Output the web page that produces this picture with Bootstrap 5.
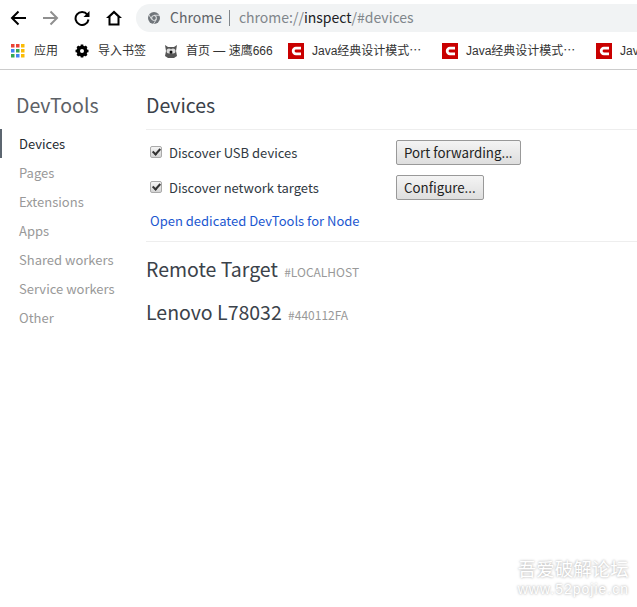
<!DOCTYPE html>
<html lang="en">
<head>
<meta charset="utf-8">
<title>Inspect with Chrome Developer Tools</title>
<link rel="stylesheet" href="https://cdn.jsdelivr.net/npm/bootstrap@5.3.0/dist/css/bootstrap.min.css">
<style>
html,body{height:100%;overflow:hidden}
body{font-family:"Noto Sans CJK SC","Noto Sans",sans-serif;font-size:13px;color:#303942;background:#fff;width:637px;height:607px;position:relative}
.tb-top{height:35px;padding:4px 0 3px}
.tb-ic{height:28px;flex:none}
.w-a{width:36px}
.w-b{width:30px}
.w-c{width:32px}
.w-d{width:32px;margin-right:6px}
.addr{flex:1;height:28px;background:#f1f3f4;border-radius:14px 0 0 14px;padding:0 0 1px 12px;font-size:14px;color:#5f6368;white-space:nowrap;overflow:hidden}
.addr-logo{margin-right:10px;flex:none}
.addr-sep{width:1px;height:16px;background:#80868b;margin:0 9px 0 7px}
.addr-dim{color:#80868b}
.addr-main{color:#202124}
.bm-row{height:35px;border-bottom:1px solid #ccc;white-space:nowrap;overflow:hidden;font-size:12px;color:#333;padding-left:10px;padding-bottom:3px;font-family:"Liberation Sans","Noto Sans CJK SC",sans-serif}
.bm-item{flex:none;display:flex;align-items:center}
.bm-ic{width:16px;height:16px;flex:none;margin-right:8px;display:block}
.bm-tight{margin-right:7px}
.b1{width:64px}
.b2{width:89px}
.b3{width:125px}
.b4{width:154px}
.shell{height:537px}
.side{width:136px;flex:none;padding-top:19px}
.side-title{font-size:19.5px;font-weight:400;color:#5c6166;margin:0 0 8px 16px;line-height:32px}
.side-link{display:block;height:29px;line-height:29px;padding-left:19px;color:#999;text-decoration:none;font-size:13px}
.side-link.on{color:#262c32;padding-left:17px;border-left:2px solid #5c6670}
.main{flex:1;padding:0 0 0 10px;min-width:0}
.pg-head{height:60px;border-bottom:1px solid #eee;padding-top:19px}
.pg-title{font-size:19.5px;font-weight:400;margin:0;line-height:32px;color:#3b424a}
.opt-row{height:35px}
.opt-first{margin-top:5px}
.opt-lab{width:250px;padding-left:4px;margin:0;font-size:13px;display:flex;align-items:center;color:#303942;padding-top:1px}
.chk{appearance:none;width:12px;height:12px;margin:0 7px 3px 0;border:1px solid #aaa;border-radius:2px;background:linear-gradient(#f4f4f4,#d4d4d4);position:relative;flex:none}
.chk::after{content:"";position:absolute;left:3px;top:0;width:5px;height:8px;border:solid #333;border-width:0 2px 2px 0;transform:rotate(42deg)}
.act-btn{height:25px;padding:0 7px;border:1px solid #999;border-radius:2px;background:linear-gradient(#f4f4f4,#dedede);font-size:13.3px;line-height:22px;color:#222}
.node-link{display:block;margin:6px 0 0 4px;color:#1b57d0;text-decoration:none;font-size:13px;line-height:20px;height:30px}
.sep{border-top:1px solid #eee;height:0}
.tgt{line-height:32px;margin:0;font-size:19.5px;font-weight:400;color:#3b424a}
.tgt-sub{font-size:12px;color:#999;margin-left:2px;text-transform:uppercase;font-weight:400}
.tgt-a{margin-top:11px}
.tgt-b{margin-top:8px}
.wm{position:absolute;right:8px;bottom:11px;color:#fff;text-align:center;text-shadow:0 0 3px #bbb,0 0 2px #ccc;line-height:1;pointer-events:none}
.wm-a{font-size:18.5px;margin-bottom:5px}
.wm-b{font-size:14px;letter-spacing:1px;font-family:"Liberation Sans",sans-serif}
</style>
</head>
<body>
<header>
  <div class="tb-top d-flex align-items-center">
    <div class="tb-ic w-a d-flex align-items-center justify-content-center">
      <svg width="16" height="16" viewBox="0 0 16 16"><path d="M16 8H2M8.500 1.500L2 8l6.500 6.500" fill="none" stroke="#000" stroke-width="2"/></svg>
    </div>
    <div class="tb-ic w-b d-flex align-items-center justify-content-center">
      <svg width="16" height="16" viewBox="0 0 16 16"><path d="M0 8h14M7.500 1.500L14 8l-6.500 6.500" fill="none" stroke="#8f8f8f" stroke-width="2"/></svg>
    </div>
    <div class="tb-ic w-c d-flex align-items-center justify-content-center">
      <svg width="16" height="16" viewBox="0 0 16 16"><path d="M13.300 4.600A6.500 6.500 0 1 0 14.500 9.500" fill="none" stroke="#000" stroke-width="2"/><path d="M15.500 1v6h-6z" fill="#000"/></svg>
    </div>
    <div class="tb-ic w-d d-flex align-items-center justify-content-center">
      <svg width="16" height="16" viewBox="0 0 16 16"><path d="M8 .5L0 8h2.500v7.500h11V8H16zM4.500 13.500V6.800L8 3.400l3.500 3.400v6.700z" fill="#000" fill-rule="evenodd"/></svg>
    </div>
    <div class="addr d-flex align-items-center">
      <svg class="addr-logo" width="12" height="12" viewBox="0 0 14 14"><circle cx="7" cy="7" r="7" fill="#70757a"/><circle cx="7" cy="7" r="3.200" fill="#f1f3f4"/><circle cx="7" cy="7" r="2.200" fill="#70757a"/><path d="M7 3.800h7M4.200 8.600L.8 2.800M9.800 8.600L6.400 14" stroke="#f1f3f4" stroke-width=".9"/></svg>
      <span>Chrome</span><span class="addr-sep"></span><span class="addr-dim">chrome://</span><span class="addr-main">inspect</span><span class="addr-dim">/#devices</span>
    </div>
  </div>
  <div class="bm-row d-flex align-items-center">
    <div class="bm-item b1">
      <svg class="bm-ic" viewBox="0 0 16 16"><rect x="1" y="1" width="3.500" height="3.500" fill="#ea4335"/><rect x="6" y="1" width="3.500" height="3.500" fill="#ea4335"/><rect x="11" y="1" width="3.500" height="3.500" fill="#fbbc05"/><rect x="1" y="6" width="3.500" height="3.500" fill="#4285f4"/><rect x="6" y="6" width="3.500" height="3.500" fill="#34a853"/><rect x="11" y="6" width="3.500" height="3.500" fill="#fbbc05"/><rect x="1" y="11" width="3.500" height="3.500" fill="#34a853"/><rect x="6" y="11" width="3.500" height="3.500" fill="#4285f4"/><rect x="11" y="11" width="3.500" height="3.500" fill="#fbbc05"/></svg>
      <span>应用</span>
    </div>
    <div class="bm-item b2">
      <svg class="bm-ic" viewBox="0 0 16 16"><circle cx="8" cy="8" r="4" fill="none" stroke="#000" stroke-width="3"/><path d="M8 1.500v13M1.500 8h13M3.400 3.400l9.200 9.200M12.600 3.400l-9.200 9.200" stroke="#000" stroke-width="2.600"/><circle cx="8" cy="8" r="2" fill="#fff"/></svg>
      <span>导入书签</span>
    </div>
    <div class="bm-item b3">
      <svg class="bm-ic bm-tight" viewBox="0 0 16 16"><path d="M2 2l3 2h6l3-2-1 6 1 5-3 2H5l-3-2 1-5z" fill="#555"/><circle cx="6" cy="8" r="2.500" fill="#ddd"/><circle cx="10" cy="8" r="2.500" fill="#ddd"/><circle cx="8" cy="9" r="1.500" fill="#111"/></svg>
      <span>首页 — 速鹰666</span>
    </div>
    <div class="bm-item b4">
      <svg class="bm-ic" viewBox="0 0 16 16"><rect width="16" height="16" fill="#c90000"/><path d="M13 5.200H8a2.800 2.800 0 0 0 0 5.600h5" fill="none" stroke="#fff" stroke-width="2.800"/></svg>
      <span>Java经典设计模式⋯</span>
    </div>
    <div class="bm-item b4">
      <svg class="bm-ic" viewBox="0 0 16 16"><rect width="16" height="16" fill="#c90000"/><path d="M13 5.200H8a2.800 2.800 0 0 0 0 5.600h5" fill="none" stroke="#fff" stroke-width="2.800"/></svg>
      <span>Java经典设计模式⋯</span>
    </div>
    <div class="bm-item">
      <svg class="bm-ic" viewBox="0 0 16 16"><rect width="16" height="16" fill="#c90000"/><path d="M13 5.200H8a2.800 2.800 0 0 0 0 5.600h5" fill="none" stroke="#fff" stroke-width="2.800"/></svg>
      <span>Java经典设计模式⋯</span>
    </div>
  </div>
</header>
<div class="shell d-flex">
  <nav class="side">
    <h1 class="side-title">DevTools</h1>
    <a class="side-link on" href="#">Devices</a>
    <a class="side-link" href="#">Pages</a>
    <a class="side-link" href="#">Extensions</a>
    <a class="side-link" href="#">Apps</a>
    <a class="side-link" href="#">Shared workers</a>
    <a class="side-link" href="#">Service workers</a>
    <a class="side-link" href="#">Other</a>
  </nav>
  <main class="main">
    <div class="pg-head"><h2 class="pg-title">Devices</h2></div>
    <div class="opt-row opt-first d-flex align-items-center">
      <label class="opt-lab"><input class="chk" type="checkbox" checked>Discover USB devices</label>
      <button class="act-btn" type="button">Port forwarding...</button>
    </div>
    <div class="opt-row d-flex align-items-center">
      <label class="opt-lab"><input class="chk" type="checkbox" checked>Discover network targets</label>
      <button class="act-btn" type="button">Configure...</button>
    </div>
    <a class="node-link" href="#">Open dedicated DevTools for Node</a>
    <div class="sep"></div>
    <h3 class="tgt tgt-a">Remote Target <span class="tgt-sub">#LOCALHOST</span></h3>
    <h3 class="tgt tgt-b">Lenovo L78032 <span class="tgt-sub">#440112FA</span></h3>
  </main>
</div>
<div class="wm"><div class="wm-a">吾爱破解论坛</div><div class="wm-b">www.52pojie.cn</div></div>
<script src="https://cdn.jsdelivr.net/npm/bootstrap@5.3.0/dist/js/bootstrap.bundle.min.js"></script>
</body>
</html>
